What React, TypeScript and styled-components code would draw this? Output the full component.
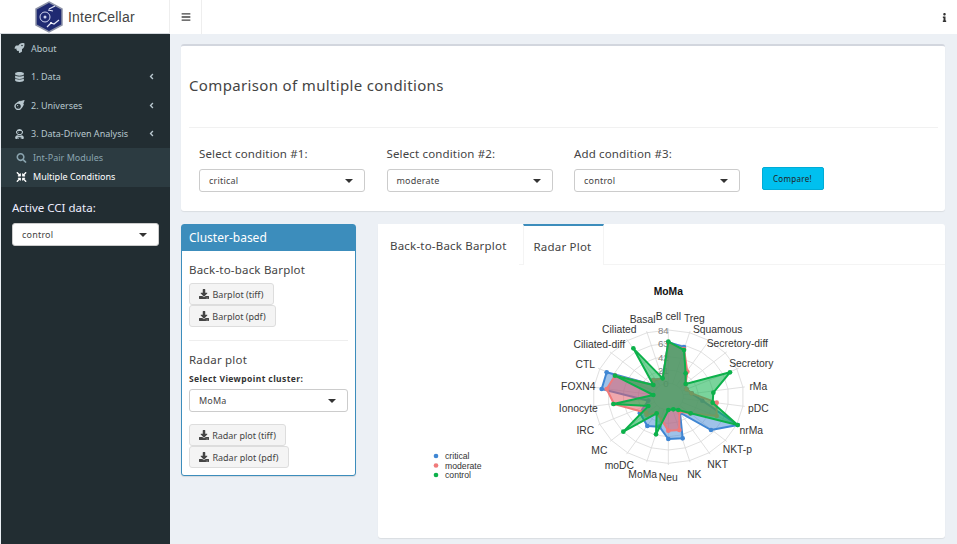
import React from "react";
import styled, { createGlobalStyle } from "styled-components";
import { FaRocket, FaDatabase, FaMeteor, FaUserAstronaut, FaSearch, FaCompressArrowsAlt, FaBars, FaInfo, FaDownload, FaAngleLeft } from "react-icons/fa";

const Global = createGlobalStyle`
  html, body { margin: 0; padding: 0; background: #ecf0f5; }
  body { font-family: "Noto Sans", "Open Sans", sans-serif; color: #333; }
  * { box-sizing: border-box; }
`;
const Page = styled.div`width: 957px; height: 544px; overflow: hidden; display: flex; flex-direction: column; background: #ecf0f5;`;
const Header = styled.header`height: 34px; display: flex; background: #fff; flex: none;`;
const Brand = styled.div`width: 170px; display: flex; align-items: center; padding-left: 34px; gap: 4px; font-family: "Liberation Sans", sans-serif; font-size: 14px; color: #444; letter-spacing: .2px; border-right: 1px solid #eee; border-bottom: 1px solid #d5d9de;`;
const Burger = styled.div`width: 32px; display: flex; align-items: center; justify-content: center; color: #444; font-size: 10px; border-right: 1px solid #eee;`;
const HeaderFill = styled.div`flex: 1; display: flex; justify-content: flex-end; align-items: center; padding-right: 8px; color: #333; font-size: 9px;`;
const Body = styled.div`flex: 1; display: flex; min-height: 0;`;
const Side = styled.aside`width: 169px; margin-left: 1px; flex: none; background: #222d32; color: #b8c7ce;`;
const Item = styled.div`height: 28.5px; display: flex; align-items: center; padding: 0 14px 0 13px; font-size: 9px; gap: 6px; & > svg:first-child { width: 11px; font-size: 10px; }`;
const Arrow = styled.span`margin-left: auto; font-size: 9px; display: flex;`;
const Sub = styled.div`background: #2c3b41; height: 39px; margin-bottom: 13px;`;
const SubItem = styled.div<{ $on?: boolean }>`height: 19px; display: flex; align-items: center; gap: 6px; padding-left: 15px; font-size: 9px; color: ${p => (p.$on ? "#fff" : "#8aa4af")}; & > svg { width: 11px; font-size: 10px; }`;
const SideLabel = styled.div`font-size: 11.5px; color: #eef; padding-left: 11px; line-height: 16px; margin-bottom: 7px;`;
const SideSelectWrap = styled.div`padding: 0 11px;`;
const Select = styled.div`width: 100%; height: 23px; background: #fff; border: 1px solid #ccc; border-radius: 3px; display: flex; align-items: center; justify-content: space-between; padding: 0 11px 0 9px; font-size: 9px; color: #444; letter-spacing: .2px; flex: none;`;
const Caret = styled.i`width: 0; height: 0; border-left: 4px solid transparent; border-right: 4px solid transparent; border-top: 4px solid #333;`;
const Main = styled.main`flex: 1; padding: 10px 12px 0 11px; min-width: 0;`;
const Box = styled.section`height: 167px; background: #fff; border-top: 2px solid #d2d6de; border-radius: 3px; box-shadow: 0 1px 1px rgba(0,0,0,.08);`;
const Title = styled.h2`height: 82px; margin: 0 7px 0 8px; padding-top: 29px; font-weight: 400; font-size: 15px; line-height: 20px; color: #444; border-bottom: 1px solid #f1f1f1; letter-spacing: .35px;`;
const Conds = styled.div`display: flex; align-items: flex-start; padding: 18px 0 0 18px; gap: 21.5px;`;
const Cond = styled.div`width: 166px; display: flex; flex-direction: column;`;
const CondLabel = styled.label`font-size: 11.5px; line-height: 16px; color: #444; margin-bottom: 7px; letter-spacing: .15px;`;
const Compare = styled.div`margin-top: 21px; width: 62px; height: 23px; background: #00c0ef; border: 1px solid #00acd6; border-radius: 2px; font-size: 8px; display: flex; align-items: center; justify-content: center; color: #222; letter-spacing: .3px;`;
const Row = styled.div`display: flex; margin-top: 13px; gap: 22px; align-items: flex-start;`;
const Cluster = styled.section`width: 175px; height: 252px; background: #fff; border: 1px solid #3c8dbc; border-radius: 3px; box-shadow: 0 1px 1px rgba(0,0,0,.1);`;
const ClusterHead = styled.div`height: 26px; background: #3c8dbc; color: #fff; font-size: 12px; padding: 0 0 2px 7px; display: flex; align-items: center;`;
const ClusterBody = styled.div`padding: 11px 7px 0 7px;`;
const H4 = styled.h4`margin: 0 0 5px; font-weight: 400; font-size: 11.5px; line-height: 16px; color: #444; letter-spacing: .2px;`;
const Btn = styled.div<{ $w: number }>`width: ${p => p.$w}px; height: 22px; background: #f4f4f4; border: 1px solid #ddd; border-radius: 3px; color: #444; font-size: 9px; display: flex; align-items: center; justify-content: center; gap: 3px; & > svg { font-size: 10px; color: #444; }`;
const Hr = styled.div`height: 1px; background: #eee; margin: 13px 0 11px;`;
const Bold = styled.div`font-size: 8.5px; font-weight: 700; line-height: 12px; margin: 2px 0 4px; color: #333; letter-spacing: .4px;`;
const Gap = styled.div`height: 12px;`;
const Tabs = styled.section`flex: 1; height: 314px; background: #fff; border-radius: 3px; box-shadow: 0 1px 1px rgba(0,0,0,.08);`;
const TabBar = styled.div`height: 41px; display: flex; border-bottom: 1px solid #f4f4f4;`;
const Tab = styled.div<{ $on?: boolean }>`padding: 2px 12px 0 ${p => (p.$on ? 10 : 12)}px; margin-right: 4px; display: flex; align-items: center; font-size: 11.5px; color: #444; letter-spacing: .2px; margin-bottom: -1px; background: #fff; ${p => p.$on ? "border-top: 2px solid #3c8dbc; border-left: 1px solid #f4f4f4; border-right: 1px solid #f4f4f4;" : ""}`;
const Plot = styled.svg`display: block; margin: 15px 0 0 42px;`;

const cx = 385, cy = 350;
const rx = 226 / 200, step = 40;
const names: [string, number, number][] = [
  ["B cell",385,110],["Treg",463,116],["Squamous",533,148],["Secretory-diff",592,190],["Secretory",634,249],["rMa",655,318],["pDC",655,385],["nrMa",634,452],["NKT-p",592,507],["NKT",533,553],["NK",463,584],["Neu",385,593],["MoMa",308,584],["moDC",238,556],["MC",178,510],["IRC",136,452],["Ionocyte",115,385],["FOXN4",115,318],["CTL",136,252],["Ciliated-diff",178,194],["Ciliated",238,148],["Basal",308,118],
];
const pt = (i: number, r: number) => {
  const a = (i * 2 * Math.PI) / 22;
  return [cx + Math.sin(a) * r * rx, cy - Math.cos(a) * r] as const;
};
const blue: number[][] = [[385,187],[432,201],[437,280],[437,312],[440,328],[455,340],[487,362],[593,435],[513,450],[420,398],[428,475],[385,477],[358,440],[322,438],[300,400],[300,398],[325,362],[185,327],[200,277],[340,315],[340,300],[368,295]];
const red: number[][] = [[385,190],[432,207],[442,275],[437,312],[440,328],[455,340],[530,368],[530,408],[450,400],[418,395],[418,450],[385,452],[365,420],[350,400],[320,405],[318,398],[222,372],[200,327],[225,287],[340,315],[340,300],[368,295]];
const green: number[][] = [[385,185],[432,210],[437,280],[437,312],[570,277],[520,338],[518,368],[593,435],[452,400],[415,390],[400,388],[385,390],[348,463],[350,400],[250,455],[325,378],[220,372],[340,345],[225,287],[340,315],[280,205],[368,295]];
const P = (a: number[][]) => a.map(p => p.join(",")).join(" ");
const series = [
  { d: blue, c: "#3f86d3", f: "rgba(63,134,211,.5)" },
  { d: red, c: "#f07a7a", f: "rgba(225,95,105,.55)" },
  { d: green, c: "#0db14b", f: "rgba(13,177,75,.55)" },
];

const Logo = () => (
  <svg width="30" height="32" viewBox="0 0 30 32">
    <polygon points="15,1 28,8 28,24 15,31 2,24 2,8" fill="#1f2a72" stroke="#8d93a8" strokeWidth="1.5" />
    <circle cx="11" cy="16" r="5" fill="none" stroke="#cfd4ee" strokeWidth="1" />
    <circle cx="11" cy="16" r="1.5" fill="#cfd4ee" />
    <path d="M15 8 L21 5 M14 9 L19 10 M13 26 L17 22 L20 23 L25 19" fill="none" stroke="#e4e7f6" strokeWidth="1.2" />
    <circle cx="17" cy="22" r="1" fill="#fff" />
  </svg>
);

const Radar = () => (
  <Plot width="370" height="210" viewBox="-360 0 1110 630">
    {[1,2,3,4,5].map(k => (
      <polygon key={k} points={names.map((_, i) => pt(i, k * step).join(",")).join(" ")} fill="none" stroke="#d8d8d8" strokeWidth="2.4" />
    ))}
    {names.map((_, i) => {
      const [x, y] = pt(i, 205);
      const [x0, y0] = pt(i, 40);
      return <line key={i} x1={x0} y1={y0} x2={x} y2={y} stroke="#d8d8d8" strokeWidth="2.4" />;
    })}
    {["0","21","42","63","84"].map((t, i) => (
      <text key={t} x={386} y={322 - i * 40} textAnchor="end" fontFamily="Liberation Sans" fontSize="29" fill="#808080">{t}</text>
    ))}
    {series.map(s => (
      <g key={s.c}>
        <polygon points={P(s.d)} fill={s.f} stroke={s.c} strokeWidth="6" strokeLinejoin="round" />
        {s.d.map((p, i) => <circle key={i} cx={p[0]} cy={p[1]} r="7" fill={s.c} />)}
      </g>
    ))}
    <text x={385} y={45} textAnchor="middle" fontFamily="Liberation Sans" fontWeight="700" fontSize="31" fill="#111">MoMa</text>
    {names.map(([n, x, y]) => (
      <text key={n} x={x} y={y + 11} textAnchor="middle" fontFamily="Liberation Sans" fontSize="31" fill="#333">{n}</text>
    ))}
    {[["critical","#3f86d3"],["moderate","#f07a7a"],["control","#0db14b"]].map(([n, c], i) => (
      <g key={n}>
        <circle cx={-312} cy={528 + i * 28.5} r="7" fill={c} />
        <text x={-285} y={537 + i * 28.5} fontFamily="Liberation Sans" fontSize="26" fill="#333">{n}</text>
      </g>
    ))}
  </Plot>
);

export default function App() {
  return (
    <Page>
      <Global />
      <Header>
        <Brand><Logo />InterCellar</Brand>
        <Burger><FaBars /></Burger>
        <HeaderFill><FaInfo /></HeaderFill>
      </Header>
      <Body>
        <Side>
          <Item><FaRocket />About</Item>
          <Item><FaDatabase />1. Data<Arrow><FaAngleLeft /></Arrow></Item>
          <Item><FaMeteor />2. Universes<Arrow><FaAngleLeft /></Arrow></Item>
          <Item><FaUserAstronaut />3. Data-Driven Analysis<Arrow><FaAngleLeft /></Arrow></Item>
          <Sub>
            <SubItem><FaSearch />Int-Pair Modules</SubItem>
            <SubItem $on><FaCompressArrowsAlt />Multiple Conditions</SubItem>
          </Sub>
          <SideLabel>Active CCI data:</SideLabel>
          <SideSelectWrap><Select>control<Caret /></Select></SideSelectWrap>
        </Side>
        <Main>
          <Box>
            <Title>Comparison of multiple conditions</Title>
            <Conds>
              <Cond><CondLabel>Select condition #1:</CondLabel><Select>critical<Caret /></Select></Cond>
              <Cond><CondLabel>Select condition #2:</CondLabel><Select>moderate<Caret /></Select></Cond>
              <Cond><CondLabel>Add condition #3:</CondLabel><Select>control<Caret /></Select></Cond>
              <Compare>Compare!</Compare>
            </Conds>
          </Box>
          <Row>
            <Cluster>
              <ClusterHead>Cluster-based</ClusterHead>
              <ClusterBody>
                <H4>Back-to-back Barplot</H4>
                <Btn $w={85}><FaDownload />Barplot (tiff)</Btn>
                <Btn $w={87}><FaDownload />Barplot (pdf)</Btn>
                <Hr />
                <H4>Radar plot</H4>
                <Bold>Select Viewpoint cluster:</Bold>
                <Select>MoMa<Caret /></Select>
                <Gap />
                <Btn $w={97}><FaDownload />Radar plot (tiff)</Btn>
                <Btn $w={100}><FaDownload />Radar plot (pdf)</Btn>
              </ClusterBody>
            </Cluster>
            <Tabs>
              <TabBar>
                <Tab>Back-to-Back Barplot</Tab>
                <Tab $on>Radar Plot</Tab>
              </TabBar>
              <Radar />
            </Tabs>
          </Row>
        </Main>
      </Body>
    </Page>
  );
}
